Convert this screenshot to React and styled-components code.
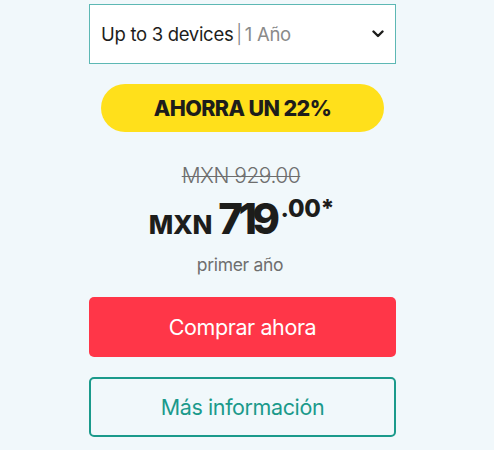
import React from "react";
import styled, { createGlobalStyle } from "styled-components";

const Global = createGlobalStyle`
  html, body { margin: 0; padding: 0; background: #f1f8fb; }
  body { font-family: "Inter", "Noto Sans", sans-serif; }
`;

const Page = styled.div`
  width: 494px;
  height: 450px;
  background: #f1f8fb;
  padding: 4px 0 0 89px;
  box-sizing: border-box;
`;

const Column = styled.div`
  width: 307px;
  display: flex;
  flex-direction: column;
  align-items: center;
`;

const Select = styled.div`
  width: 100%;
  height: 60px;
  box-sizing: border-box;
  background: #ffffff;
  border: 1px solid #5db8b4;
  display: flex;
  align-items: center;
  justify-content: space-between;
  padding: 0 11px 0 11px;
  font-size: 18.5px;
  color: #1d1d1b;
  letter-spacing: -0.3px;
`;

const SelectLabel = styled.span`
  display: flex;
  align-items: center;
`;

const Sep = styled.span`
  color: #7a7a7a;
  margin: 0 3px 0 3px;
  font-weight: 300;
`;

const Muted = styled.span`
  color: #8a8a8a;
  font-weight: 400;
`;

const Badge = styled.div`
  margin-top: 20px;
  width: 283px;
  height: 48px;
  border-radius: 24px;
  background: #ffe01b;
  display: flex;
  align-items: center;
  justify-content: center;
  font-size: 21.5px;
  font-weight: 800;
  color: #1d1d1b;
  letter-spacing: -0.6px;
`;

const OldPrice = styled.div`
  margin-top: 32px;
  margin-left: -3px;
  font-size: 21px;
  font-weight: 300;
  color: #6e6e6e;
  text-decoration: line-through;
  text-decoration-thickness: 1px;
  letter-spacing: -0.5px;
  line-height: 24px;
`;

const Price = styled.div`
  margin-top: 10px;
  margin-left: -2px;
  display: flex;
  align-items: flex-start;
  color: #1d1d1b;
  font-weight: 800;
  line-height: 1;
`;

const Currency = styled.span`
  font-size: 26px;
  margin-top: 14px;
  margin-right: 6px;
  letter-spacing: -0.2px;
`;

const Amount = styled.span`
  font-size: 42px;
  letter-spacing: -4.6px;
`;

const Cents = styled.span`
  font-size: 24px;
  margin-top: -1px;
  margin-left: 5px;
  letter-spacing: -0.3px;
`;

const Note = styled.div`
  margin-top: 14px;
  margin-left: -5px;
  font-size: 17.5px;
  color: #6e6e6e;
  letter-spacing: -0.3px;
`;

const Button = styled.button`
  width: 100%;
  height: 60px;
  box-sizing: border-box;
  border-radius: 5px;
  font-family: inherit;
  font-size: 21.5px;
  letter-spacing: -0.4px;
  display: flex;
  align-items: center;
  justify-content: center;
  cursor: pointer;
  background: ${(p) => (p.$outline ? "transparent" : "#ff3648")};
  color: ${(p) => (p.$outline ? "#1b9a8b" : "#ffffff")};
  border: ${(p) => (p.$outline ? "2px solid #1b9a8b" : "none")};
  margin-top: ${(p) => p.$mt}px;
`;

const Chevron = () => (
  <svg width="12" height="8" viewBox="0 0 12 8" fill="none">
    <path d="M1.5 1.5 L6 6 L10.5 1.5" stroke="#1d1d1b" strokeWidth="2.4" strokeLinecap="round" strokeLinejoin="round" />
  </svg>
);

export default function App() {
  return (
    <>
      <Global />
      <Page>
        <Column>
          <Select>
            <SelectLabel>
              Up to 3 devices<Sep>|</Sep><Muted>1 Año</Muted>
            </SelectLabel>
            <Chevron />
          </Select>
          <Badge>AHORRA UN 22%</Badge>
          <OldPrice>MXN 929.00</OldPrice>
          <Price>
            <Currency>MXN</Currency>
            <Amount>719</Amount>
            <Cents>.00*</Cents>
          </Price>
          <Note>primer año</Note>
          <Button $mt={22}>Comprar ahora</Button>
          <Button $outline $mt={20}>Más información</Button>
        </Column>
      </Page>
    </>
  );
}
